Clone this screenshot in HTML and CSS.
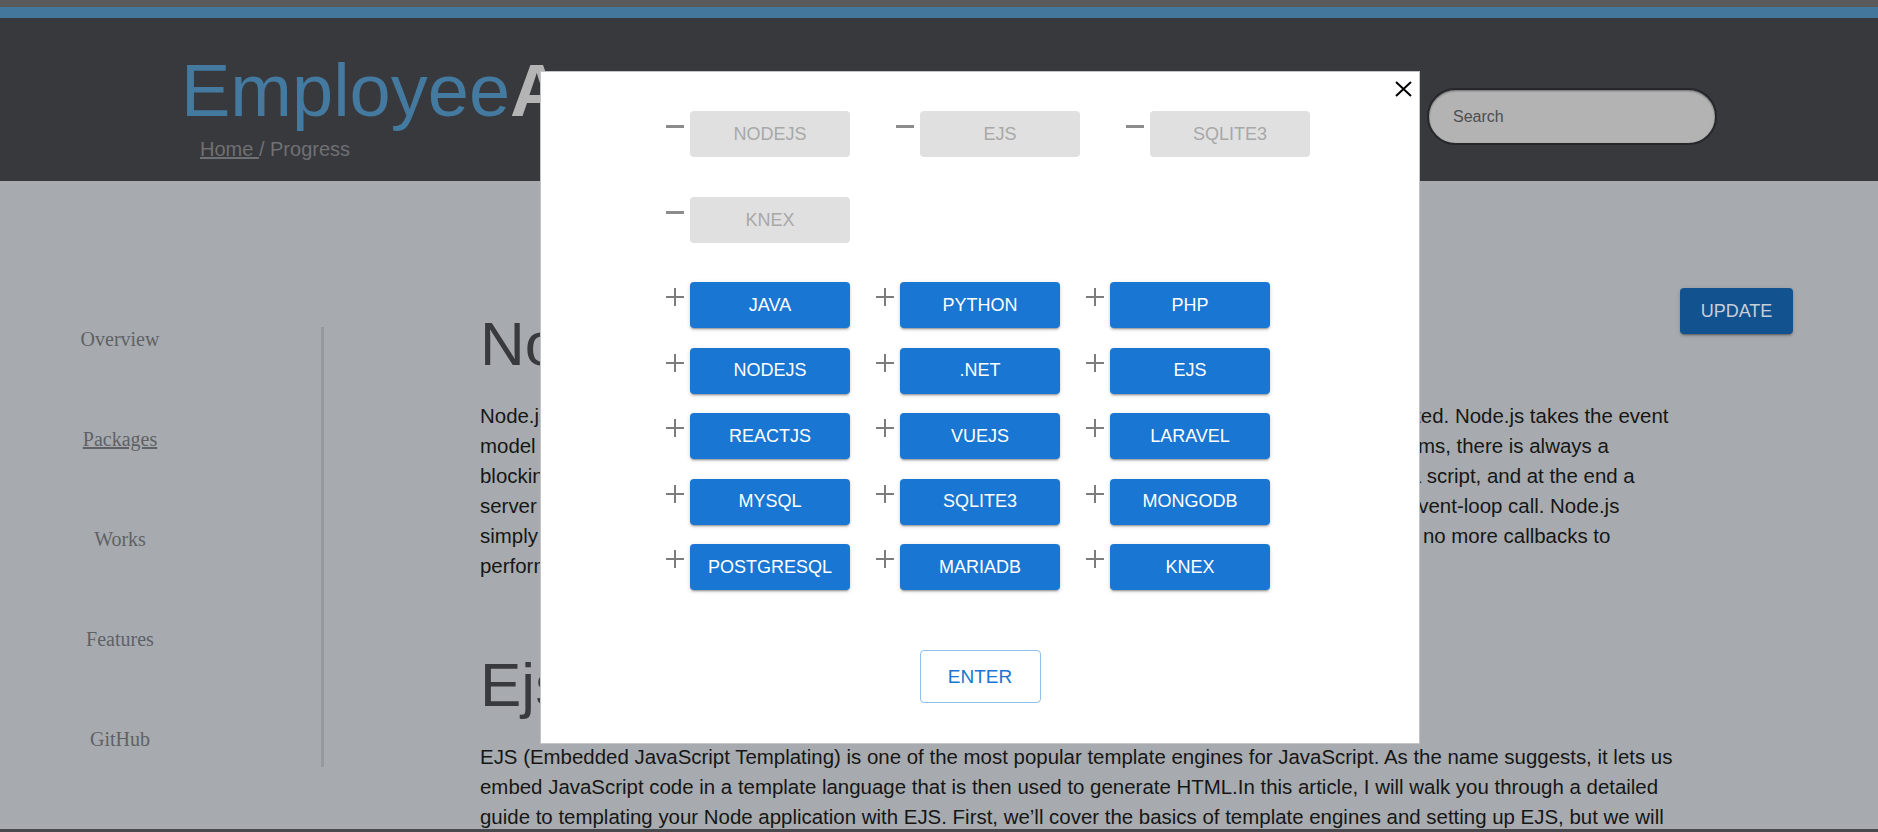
FILE: index.html
```html
<!DOCTYPE html>
<html lang="en">
<head>
<meta charset="utf-8">
<title>EmployeeApp - Progress</title>
<link rel="stylesheet" href="styles.css">
</head>
<body>
<div class="topbar"></div>
<div class="accent"></div>
<header class="header">
  <div class="brand">
    <h1 class="logo"><span class="logo-main">Employee</span><span class="logo-accent">App</span></h1>
    <div class="crumbs"><a class="crumb-link" href="#">Home </a>/ Progress</div>
  </div>
  <div class="search"><input class="search-input" type="text" placeholder="Search"></div>
</header>
<main class="main">
  <aside class="sidebar">
    <nav class="nav">
      <a class="nav-item" href="#">Overview</a>
      <a class="nav-item nav-current" href="#">Packages</a>
      <a class="nav-item" href="#">Works</a>
      <a class="nav-item" href="#">Features</a>
      <a class="nav-item" href="#">GitHub</a>
    </nav>
  </aside>
  <section class="content">
    <h2 class="title">NodeJS</h2>
    <p class="text">Node.js is similar in design to, and influenced by, systems like Ruby's Event Machine and Python's Twisted. Node.js takes the event model a bit further. It presents an event loop as a runtime construct instead of as a library. In other systems, there is always a blocking call to start the event-loop. Typically, behavior is defined through callbacks at the beginning of a script, and at the end a server is started through a blocking call like EventMachine::run(). In Node.js, there is no such start-the-event-loop call. Node.js simply enters the event loop after executing the input script. Node.js exits the event loop when there are no more callbacks to perform.</p>
    <h2 class="title">Ejs</h2>
    <p class="text">EJS (Embedded JavaScript Templating) is one of the most popular template engines for JavaScript. As the name suggests, it lets us embed JavaScript code in a template language that is then used to generate HTML.In this article, I will walk you through a detailed guide to templating your Node application with EJS. First, we’ll cover the basics of template engines and setting up EJS, but we will move on to a more advanced guide to using EJS in your Node apps.</p>
  </section>
  <div class="side-actions">
    <button class="update">UPDATE</button>
  </div>
</main>
<footer class="footer"></footer>

<div class="modal">
  <button class="close" aria-label="close">
    <svg width="17" height="16" viewBox="0 0 17 16"><path d="M1 1 L16 15 M16 1 L1 15" stroke="#000" stroke-width="2" fill="none"/></svg>
  </button>
  <div class="chosen">
    <div class="chosen-item"><span class="minus"></span><span class="chip">NODEJS</span></div>
    <div class="chosen-item"><span class="minus"></span><span class="chip">EJS</span></div>
    <div class="chosen-item"><span class="minus"></span><span class="chip">SQLITE3</span></div>
    <div class="chosen-item"><span class="minus"></span><span class="chip">KNEX</span></div>
  </div>
  <div class="options">
    <div class="option"><svg class="plus" width="18" height="18" viewBox="0 0 18 18"><path d="M9 0 V18 M0 9 H18" stroke="#7c7c7c" stroke-width="2"/></svg><button class="pkg">JAVA</button></div>
    <div class="option"><svg class="plus" width="18" height="18" viewBox="0 0 18 18"><path d="M9 0 V18 M0 9 H18" stroke="#7c7c7c" stroke-width="2"/></svg><button class="pkg">PYTHON</button></div>
    <div class="option"><svg class="plus" width="18" height="18" viewBox="0 0 18 18"><path d="M9 0 V18 M0 9 H18" stroke="#7c7c7c" stroke-width="2"/></svg><button class="pkg">PHP</button></div>
    <div class="option"><svg class="plus" width="18" height="18" viewBox="0 0 18 18"><path d="M9 0 V18 M0 9 H18" stroke="#7c7c7c" stroke-width="2"/></svg><button class="pkg">NODEJS</button></div>
    <div class="option"><svg class="plus" width="18" height="18" viewBox="0 0 18 18"><path d="M9 0 V18 M0 9 H18" stroke="#7c7c7c" stroke-width="2"/></svg><button class="pkg">.NET</button></div>
    <div class="option"><svg class="plus" width="18" height="18" viewBox="0 0 18 18"><path d="M9 0 V18 M0 9 H18" stroke="#7c7c7c" stroke-width="2"/></svg><button class="pkg">EJS</button></div>
    <div class="option"><svg class="plus" width="18" height="18" viewBox="0 0 18 18"><path d="M9 0 V18 M0 9 H18" stroke="#7c7c7c" stroke-width="2"/></svg><button class="pkg">REACTJS</button></div>
    <div class="option"><svg class="plus" width="18" height="18" viewBox="0 0 18 18"><path d="M9 0 V18 M0 9 H18" stroke="#7c7c7c" stroke-width="2"/></svg><button class="pkg">VUEJS</button></div>
    <div class="option"><svg class="plus" width="18" height="18" viewBox="0 0 18 18"><path d="M9 0 V18 M0 9 H18" stroke="#7c7c7c" stroke-width="2"/></svg><button class="pkg">LARAVEL</button></div>
    <div class="option"><svg class="plus" width="18" height="18" viewBox="0 0 18 18"><path d="M9 0 V18 M0 9 H18" stroke="#7c7c7c" stroke-width="2"/></svg><button class="pkg">MYSQL</button></div>
    <div class="option"><svg class="plus" width="18" height="18" viewBox="0 0 18 18"><path d="M9 0 V18 M0 9 H18" stroke="#7c7c7c" stroke-width="2"/></svg><button class="pkg">SQLITE3</button></div>
    <div class="option"><svg class="plus" width="18" height="18" viewBox="0 0 18 18"><path d="M9 0 V18 M0 9 H18" stroke="#7c7c7c" stroke-width="2"/></svg><button class="pkg">MONGODB</button></div>
    <div class="option"><svg class="plus" width="18" height="18" viewBox="0 0 18 18"><path d="M9 0 V18 M0 9 H18" stroke="#7c7c7c" stroke-width="2"/></svg><button class="pkg">POSTGRESQL</button></div>
    <div class="option"><svg class="plus" width="18" height="18" viewBox="0 0 18 18"><path d="M9 0 V18 M0 9 H18" stroke="#7c7c7c" stroke-width="2"/></svg><button class="pkg">MARIADB</button></div>
    <div class="option"><svg class="plus" width="18" height="18" viewBox="0 0 18 18"><path d="M9 0 V18 M0 9 H18" stroke="#7c7c7c" stroke-width="2"/></svg><button class="pkg">KNEX</button></div>
  </div>
  <div class="actions"><button class="enter">ENTER</button></div>
</div>
</body>
</html>
```
FILE: styles.css
```css
html, body {
  margin: 0;
  padding: 0;
  overflow: hidden;
}
body {
  background: #a7abaf;
  font-family: "Liberation Sans", Arial, sans-serif;
  color: #1a1a1a;
}
.topbar {
  height: 7px;
  background: #5a5a5a;
}
.accent {
  height: 11px;
  background: #44779c;
}
.header {
  height: 163px;
  box-sizing: border-box;
  background: #38393d;
  display: flex;
  justify-content: space-between;
  align-items: flex-start;
  padding: 36px 161px 0 181px;
}
.logo {
  margin: 0;
  font-size: 74px;
  line-height: 74px;
  font-weight: normal;
}
.logo-main {
  color: #4479a0;
}
.logo-accent {
  color: #b4b4b4;
  font-weight: bold;
}
.crumbs {
  margin: 9px 0 0 19px;
  font-size: 20px;
  line-height: 24px;
  color: #6f7074;
}
.crumb-link {
  color: #6f7074;
  text-decoration: underline;
}
.search {
  margin-top: 34px;
}
.search-input {
  box-sizing: border-box;
  width: 290px;
  height: 57px;
  border-radius: 29px;
  border: 2px solid #26272a;
  background: #b3b3b3;
  box-shadow: inset 0 1px 2px rgba(0,0,0,0.4);
  padding: 0 0 0 24px;
  font-family: "Liberation Sans", Arial, sans-serif;
  font-size: 16px;
  color: #4a4a4a;
  outline: none;
}
.search-input::placeholder {
  color: #4d4e50;
}
.main {
  display: flex;
  align-items: flex-start;
  height: 648px;
  overflow: hidden;
}
.sidebar {
  width: 321px;
  margin-top: 146px;
  height: 440px;
  border-right: 3px solid #96999d;
}
.nav {
  width: 240px;
  display: flex;
  flex-direction: column;
  align-items: center;
  gap: 76px;
}
.nav-item {
  font-family: "Liberation Serif", "Times New Roman", serif;
  font-size: 20px;
  line-height: 24px;
  color: #5f6165;
  text-decoration: none;
}
.nav-current {
  text-decoration: underline;
}
.content {
  width: 1200px;
  margin: 127px 0 0 156px;
}
.title {
  margin: 0 0 22px;
  font-size: 62px;
  line-height: 71px;
  font-weight: normal;
  color: #393a3e;
}
.text {
  margin: 0 0 68px;
  font-size: 20.45px;
  line-height: 30px;
  color: #161616;
}
.side-actions {
  margin-top: 107px;
}
.update {
  width: 113px;
  height: 46px;
  border: none;
  border-radius: 4px;
  background: #12528e;
  color: #c6cfda;
  font-family: "Liberation Sans", Arial, sans-serif;
  font-size: 18px;
  box-shadow: 0 3px 1px -2px rgba(0,0,0,0.2), 0 2px 2px rgba(0,0,0,0.14), 0 1px 5px rgba(0,0,0,0.12);
}
.footer {
  height: 40px;
  background: #48494d;
}
.modal {
  position: fixed;
  left: 540px;
  top: 71px;
  width: 880px;
  height: 673px;
  box-sizing: border-box;
  background: #fff;
  border: 1px solid #c4c4c4;
  padding: 39px 0 0 0;
}
.close {
  position: absolute;
  top: 9px;
  right: 7px;
  padding: 0;
  border: none;
  background: transparent;
  width: 17px;
  height: 16px;
  display: block;
}
.close svg {
  display: block;
}
.chosen {
  margin-left: 125px;
  display: grid;
  grid-template-columns: repeat(3, 184px);
  column-gap: 46px;
  row-gap: 40px;
}
.chosen-item {
  display: flex;
  align-items: flex-start;
  gap: 6px;
}
.minus {
  width: 18px;
  height: 3px;
  margin-top: 14px;
  background: #8c8c8c;
}
.chip {
  width: 160px;
  height: 46px;
  border-radius: 4px;
  background: #e0e0e0;
  color: #a8a8a8;
  font-size: 18px;
  display: flex;
  align-items: center;
  justify-content: center;
}
.options {
  margin: 39px 0 0 125px;
  display: grid;
  grid-template-columns: repeat(3, 184px);
  column-gap: 26px;
  row-gap: 19.5px;
}
.option {
  display: flex;
  align-items: flex-start;
  gap: 6px;
}
.plus {
  display: block;
  margin-top: 6px;
  flex: none;
}
.pkg {
  width: 160px;
  height: 46px;
  border: none;
  border-radius: 4px;
  background: #1976d2;
  color: #fff;
  font-family: "Liberation Sans", Arial, sans-serif;
  font-size: 18px;
  padding: 0;
  box-shadow: 0 3px 1px -2px rgba(0,0,0,0.2), 0 2px 2px rgba(0,0,0,0.14), 0 1px 5px rgba(0,0,0,0.12);
}
.actions {
  margin-top: 60px;
  display: flex;
  justify-content: center;
}
.enter {
  width: 121px;
  height: 53px;
  border: 1px solid #90bfec;
  border-radius: 4px;
  background: #fff;
  color: #1976d2;
  font-family: "Liberation Sans", Arial, sans-serif;
  font-size: 19px;
  padding: 0;
}
```
